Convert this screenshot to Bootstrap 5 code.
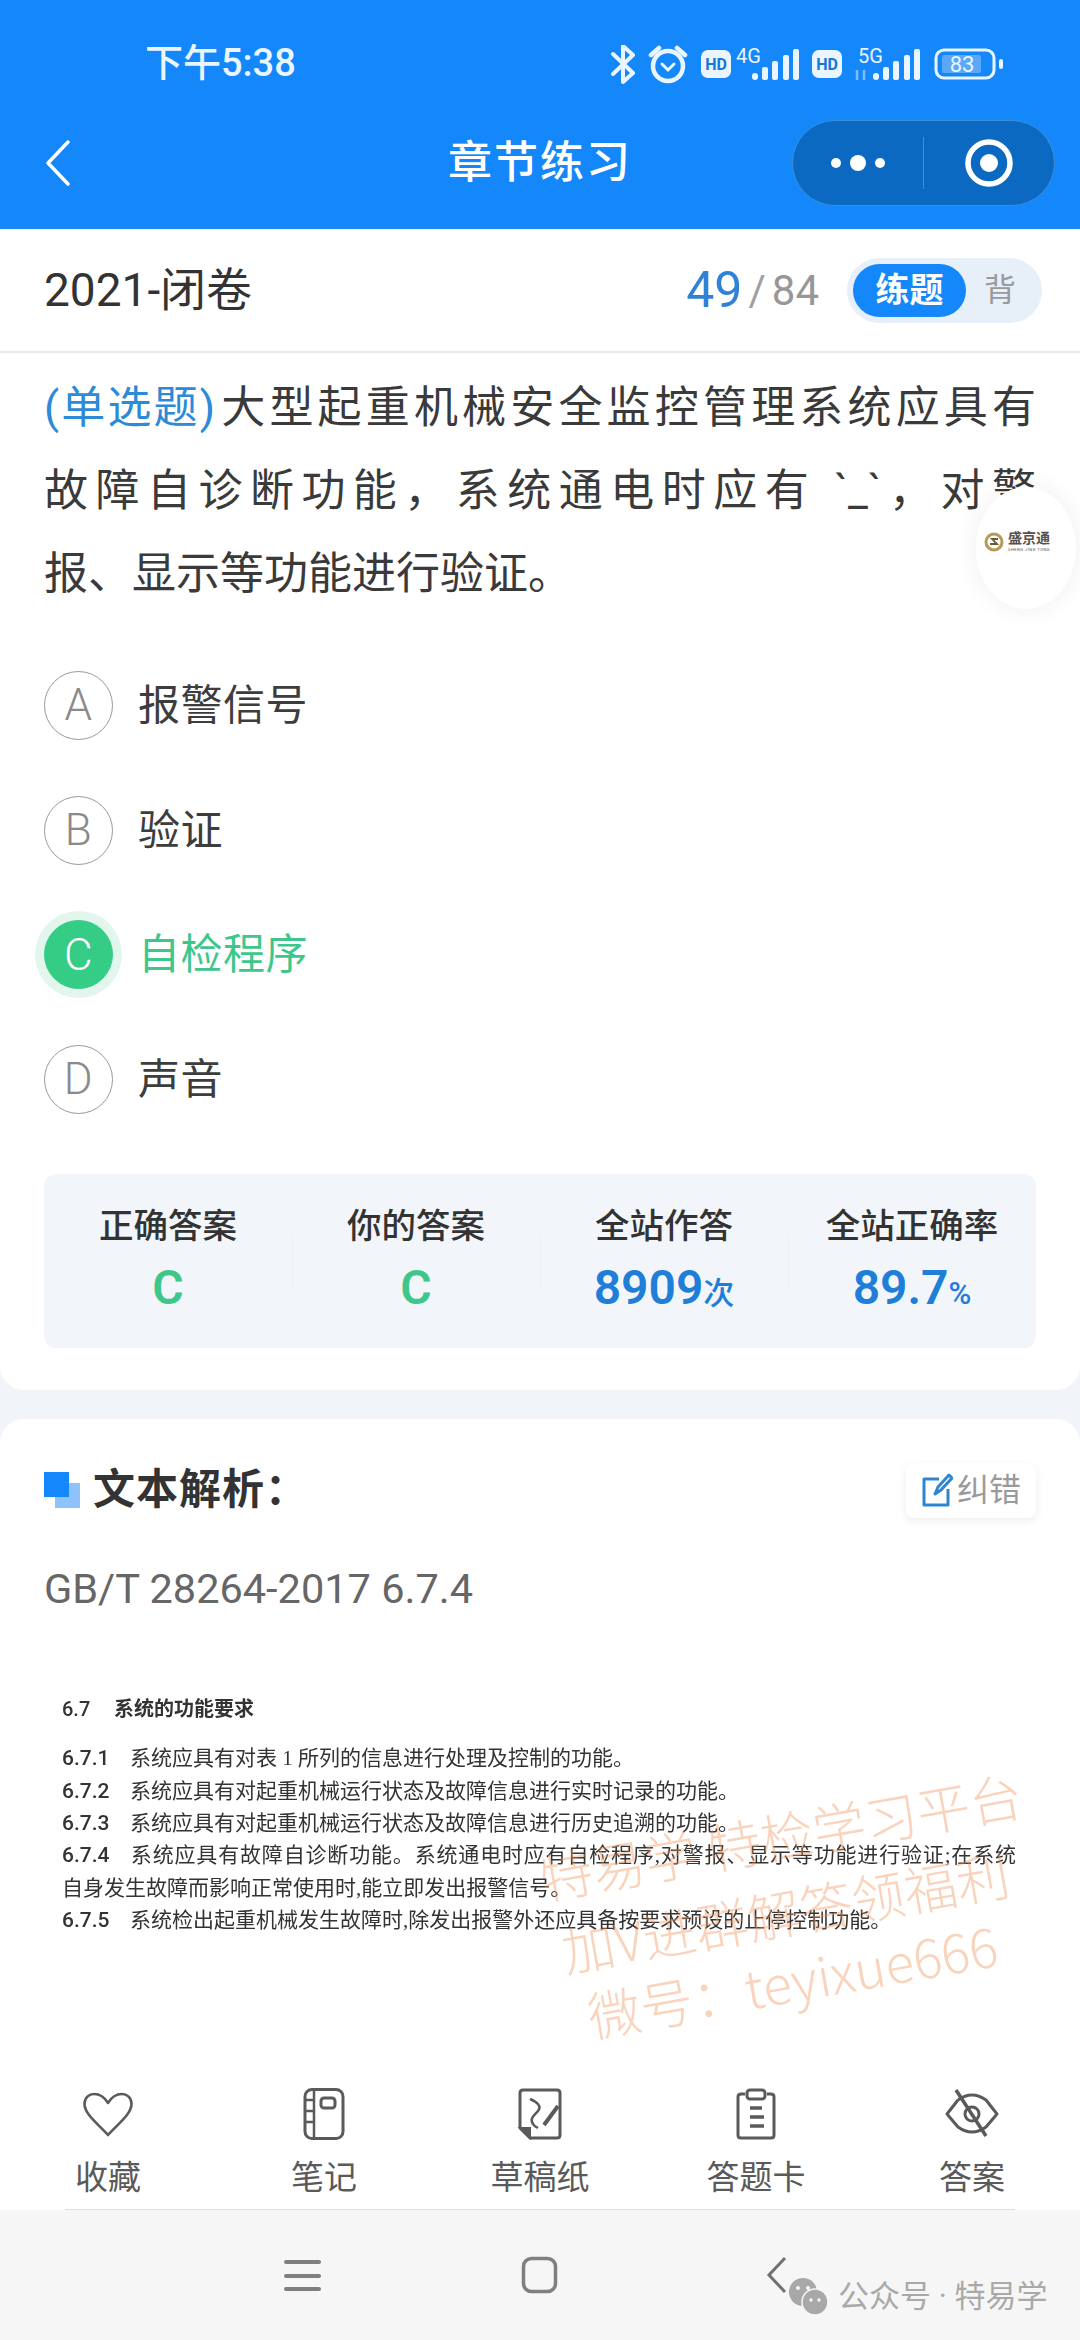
<!DOCTYPE html>
<html lang="zh-CN">
<head>
<meta charset="utf-8">
<title>章节练习</title>
<link href="https://cdn.jsdelivr.net/npm/bootstrap@5.3.0/dist/css/bootstrap.min.css" rel="stylesheet">
<style>
html,body{margin:0;background:#fff}
body{font-family:Roboto,"Noto Sans CJK SC",sans-serif;color:#3a3a3a}
.phone{width:1080px;height:2340px;overflow:hidden;position:relative;background:#f1f5f9}
.hdr{background:#1487fb;height:229px;color:#fff}
.status-row{height:120px;padding:40px 0 0 145px}
.clock{font-size:38px;line-height:46px;font-weight:500;color:#eaf5ff}
.status-svg{position:relative;display:block;margin:5px 0 0 auto;width:394px;height:40px}
.status-wrap{padding-right:76px}
.nav-row{height:86px}
.nav-side{flex:1 1 0;min-width:0}
.nav-title{font-size:44px;line-height:60px;font-weight:500;letter-spacing:2px}
.capsule{width:263px;height:86px;border-radius:43px;background:#0b69c2;border:1px solid #3a8fdc;margin-right:25px}
.capsule-part{flex:1 1 0;height:100%}
.capsule-sep{width:1px;height:52px;background:#3d8fdb}
.sub-bar{height:124px;background:#fff;border-bottom:2px solid #e9e9e9;padding:0 38px 0 44px}
.sub-title{font-size:46px;color:#333}
.num-now{font-size:50px;color:#2f82d6;font-weight:400}
.num-sep{font-size:42px;color:#a0a0a0;margin:0 6px}
.num-all{font-size:42px;color:#979797}
.mode-pill{width:195px;height:65px;border-radius:33px;background:#e7eff9;padding:6px;margin-left:28px}
.mode-on{width:113px;height:53px;border-radius:27px;background:#1487fb;color:#fff;font-size:34px;font-weight:700;line-height:53px;text-align:center}
.mode-off{font-size:32px;color:#9a9a9a;flex:1;text-align:center;padding-right:2px}
.top-card{background:#fff;padding:14px 44px 42px;border-radius:0 0 24px 24px}
.q-text{font-size:44px;line-height:83px;color:#3a3a3a;width:992px}
.q-line{display:block;text-align:justify;text-align-last:justify;white-space:nowrap}
.q-end{display:block}
.q-type{color:#2d8ad8;letter-spacing:-2px;margin-right:4px}
.opt-row{height:124.7px;gap:25px;font-size:42px;letter-spacing:.5px;color:#3d3d3d}
.opt-list{margin-top:27px}
.opt-ball{width:69px;height:69px;border-radius:50%;border:1.5px solid #999;color:#8a8a8a;font-size:44px;font-weight:300;line-height:1;flex:none}
.opt-good{color:#3fc78b}
.opt-good .opt-ball{background:#35cc86;border-color:#35cc86;color:#fff;box-shadow:0 0 0 9px #e2f6ed}
.stat-box{background:#f2f6fa;border-radius:12px;height:174px;margin-top:32px}
.stat-col{flex:1 1 0;text-align:center;padding-top:31px;position:relative}
.stat-col+.stat-col::before{content:"";position:absolute;left:0;top:62px;height:52px;width:1px;background:#ebf0f5}
.stat-lbl{font-size:34.5px;line-height:42px;font-weight:500;color:#333}
.stat-val{font-size:48px;line-height:62px;font-weight:600;margin-top:10px}
.val-green{color:#3fc78b}
.val-blue{color:#1f7fd8}
.stat-unit{font-size:31px;font-weight:500}
.low-card{background:#fff;border-radius:24px 24px 0 0;margin-top:29px;padding:44px 44px 0;flex:1 1 0;min-height:0;position:relative;overflow:hidden}
.sect-mark{width:36px;height:36px;position:relative;flex:none}
.sect-mark::before{content:"";position:absolute;left:11px;top:11px;width:25px;height:25px;background:#8fc1fb}
.sect-mark::after{content:"";position:absolute;left:0;top:0;width:25px;height:25px;background:#1487fb}
.sect-title{font-size:42px;font-weight:700;color:#333;margin-left:13px;letter-spacing:1px;line-height:50px}
.fix-btn{width:130px;height:55px;border-radius:8px;background:#fff;box-shadow:0 3px 10px rgba(0,0,0,.07);font-size:32px;color:#9a9a9a;gap:4px}
.ref-code{font-size:41.5px;color:#666;margin-top:46px;line-height:50px}
.scan{margin:79px 0 0 18px;width:954px;font-size:21px;line-height:32.4px;color:#333;font-family:"Liberation Serif","Noto Sans CJK SC",serif;filter:blur(.5px)}
.scan p{margin:0}
.scan .scan-head{font-weight:700;font-family:Roboto,"Noto Sans CJK SC",sans-serif;margin-bottom:17px;font-size:20px}
.scan-num{display:inline-block;width:68px;font-family:Roboto,sans-serif;font-weight:500}
.scan-fill{text-align:justify;text-align-last:justify;white-space:nowrap}
.scan-head .scan-num{width:52px}
.stamp{position:absolute;color:rgba(240,150,95,.42);font-size:53px;line-height:1;white-space:nowrap;transform:rotate(-10deg);transform-origin:left center;font-family:"Noto Sans CJK SC",sans-serif;font-weight:300}
.tabs{background:#fff;padding:19px 0 11px}
.tab-item{flex:1 1 0;text-align:center;color:#5a5a5a;font-size:33px;line-height:40px}
.tab-item svg{display:block;margin:0 auto 18px;width:56px;height:52px}
.tab-rule{height:1px;background:#ddd;margin:0 65px}
.tabs-wrap{background:#fff}
.sys-nav{height:130px;background:#f6f6f6;position:relative}
.sys-nav svg{display:block}
.mp-mark{position:absolute;left:787px;top:66px;color:#a9a9a9;font-size:31px;line-height:42px;gap:9px}
.float-dot{position:absolute;left:976px;top:487px;width:100px;height:122px;border-radius:50%;background:#fff;box-shadow:0 0 18px 8px rgba(0,0,0,.035)}
.float-brand{position:absolute;left:8px;top:44px;gap:4px;font-size:14px;font-weight:700;color:#55504a;line-height:1;white-space:nowrap}
.float-sub{font-size:4px;font-weight:400;display:block;margin-top:3px;letter-spacing:.5px}
</style>
</head>
<body>
<div class="phone d-flex flex-column">
  <header class="hdr">
    <div class="status-row d-flex justify-content-between status-wrap">
      <div class="clock">下午5:38</div>
      <svg class="status-svg" viewBox="610 45 394 40" fill="none">
        <path d="M613 54l20 19-10 9V46l10 9-20 19" stroke="#eaf5ff" stroke-width="4" stroke-linejoin="round" stroke-linecap="round"/>
        <circle cx="668" cy="66" r="15" stroke="#eaf5ff" stroke-width="4.5"/>
        <path d="M651 55l8-7M685 55l-8-7" stroke="#eaf5ff" stroke-width="4.5" stroke-linecap="round"/>
        <path d="M662 64l6 6 6-6" stroke="#eaf5ff" stroke-width="3" stroke-linecap="round"/>
        <rect x="701" y="50" width="30" height="28" rx="7" fill="#eaf5ff"/>
        <text x="716" y="70" text-anchor="middle" font-family="Roboto,sans-serif" font-size="16" font-weight="700" fill="#1477d9">HD</text>
        <text x="736" y="63" font-family="Roboto,sans-serif" font-size="20" fill="#eaf5ff">4G</text>
        <g fill="#eaf5ff"><rect x="752" y="73" width="6" height="7" rx="3"/><rect x="762" y="67" width="6" height="13" rx="2"/><rect x="772" y="61" width="6" height="19" rx="2"/><rect x="783" y="55" width="6" height="25" rx="2"/><rect x="793" y="49" width="6" height="31" rx="2"/></g>
        <rect x="812" y="50" width="30" height="28" rx="7" fill="#eaf5ff"/>
        <text x="827" y="70" text-anchor="middle" font-family="Roboto,sans-serif" font-size="16" font-weight="700" fill="#1477d9">HD</text>
        <text x="858" y="63" font-family="Roboto,sans-serif" font-size="20" fill="#eaf5ff">5G</text>
        <path d="M857 80v-10M864 70v10" stroke="#7dbcf8" stroke-width="2.5"/>
        <g fill="#eaf5ff"><rect x="873" y="73" width="6" height="7" rx="3"/><rect x="883" y="67" width="6" height="13" rx="2"/><rect x="893" y="61" width="6" height="19" rx="2"/><rect x="904" y="55" width="6" height="25" rx="2"/><rect x="914" y="49" width="6" height="31" rx="2"/></g>
        <rect x="936" y="50" width="58" height="28" rx="8" stroke="#eaf5ff" stroke-width="3"/>
        <rect x="942" y="55" width="39" height="18" rx="2" fill="#5aa8f7"/>
        <text x="962" y="72" text-anchor="middle" font-family="Roboto,sans-serif" font-size="22" fill="#eaf5ff">83</text>
        <rect x="999" y="59" width="4" height="10" rx="2" fill="#eaf5ff"/>
      </svg>
    </div>
    <div class="nav-row d-flex align-items-center">
      <div class="nav-side">
        <svg width="30" height="48" viewBox="0 0 30 48" fill="none" class="d-block" style="margin-left:43px"><path d="M25 3L5 24l20 21" stroke="#fff" stroke-width="3.5" stroke-linecap="round" stroke-linejoin="round"/></svg>
      </div>
      <div class="nav-title">章节练习</div>
      <div class="nav-side d-flex justify-content-end">
        <div class="capsule d-flex align-items-center">
          <div class="capsule-part d-flex align-items-center justify-content-center">
            <svg width="56" height="20" viewBox="0 0 56 20"><circle cx="6" cy="10" r="5" fill="#fff"/><circle cx="28" cy="10" r="8" fill="#fff"/><circle cx="50" cy="10" r="5" fill="#fff"/></svg>
          </div>
          <div class="capsule-sep"></div>
          <div class="capsule-part d-flex align-items-center justify-content-center">
            <svg width="50" height="50" viewBox="0 0 50 50" fill="none"><circle cx="25" cy="25" r="21" stroke="#fff" stroke-width="5.5"/><circle cx="25" cy="25" r="9" fill="#fff"/></svg>
          </div>
        </div>
      </div>
    </div>
  </header>

  <div class="sub-bar d-flex align-items-center justify-content-between">
    <div class="sub-title">2021-闭卷</div>
    <div class="d-flex align-items-center">
      <span class="num-now">49</span><span class="num-sep">/</span><span class="num-all">84</span>
      <div class="mode-pill d-flex align-items-center">
        <div class="mode-on">练题</div>
        <div class="mode-off">背</div>
      </div>
    </div>
  </div>

  <section class="top-card">
    <div class="q-text"><span class="q-line"><span class="q-type">(单选题)</span>大型起重机械安全监控管理系统应具有</span><span class="q-line">故障自诊断功能，系统通电时应有 `_`，对警</span><span class="q-end">报、显示等功能进行验证。</span></div>
    <div class="opt-list">
      <div class="opt-row d-flex align-items-center"><span class="opt-ball d-flex align-items-center justify-content-center">A</span><span>报警信号</span></div>
      <div class="opt-row d-flex align-items-center"><span class="opt-ball d-flex align-items-center justify-content-center">B</span><span>验证</span></div>
      <div class="opt-row opt-good d-flex align-items-center"><span class="opt-ball d-flex align-items-center justify-content-center">C</span><span>自检程序</span></div>
      <div class="opt-row d-flex align-items-center"><span class="opt-ball d-flex align-items-center justify-content-center">D</span><span>声音</span></div>
    </div>
    <div class="stat-box d-flex">
      <div class="stat-col"><div class="stat-lbl">正确答案</div><div class="stat-val val-green">C</div></div>
      <div class="stat-col"><div class="stat-lbl">你的答案</div><div class="stat-val val-green">C</div></div>
      <div class="stat-col"><div class="stat-lbl">全站作答</div><div class="stat-val val-blue">8909<span class="stat-unit">次</span></div></div>
      <div class="stat-col"><div class="stat-lbl">全站正确率</div><div class="stat-val val-blue">89.7<span class="stat-unit">%</span></div></div>
    </div>
  </section>

  <section class="low-card">
    <div class="d-flex align-items-center justify-content-between">
      <div class="d-flex align-items-center"><span class="sect-mark"></span><span class="sect-title">文本解析：</span></div>
      <div class="fix-btn d-flex align-items-center justify-content-center">
        <svg width="32" height="34" viewBox="0 0 32 34" fill="none"><path d="M18 6H3v26h24V16M14 21l3-7L28 2l3 3-11 12z" stroke="#2f86cf" stroke-width="3" stroke-linejoin="round"/></svg>
        <span>纠错</span>
      </div>
    </div>
    <div class="ref-code">GB/T 28264-2017 6.7.4</div>
    <div class="scan">
      <p class="scan-head"><span class="scan-num">6.7</span>系统的功能要求</p>
      <p><span class="scan-num">6.7.1</span>系统应具有对表 1 所列的信息进行处理及控制的功能。</p>
      <p><span class="scan-num">6.7.2</span>系统应具有对起重机械运行状态及故障信息进行实时记录的功能。</p>
      <p><span class="scan-num">6.7.3</span>系统应具有对起重机械运行状态及故障信息进行历史追溯的功能。</p>
      <p class="scan-fill"><span class="scan-num">6.7.4</span>系统应具有故障自诊断功能。系统通电时应有自检程序,对警报、显示等功能进行验证;在系统</p>
      <p>自身发生故障而影响正常使用时,能立即发出报警信号。</p>
      <p><span class="scan-num">6.7.5</span>系统检出起重机械发生故障时,除发出报警外还应具备按要求预设的止停控制功能。</p>
    </div>
    <div class="stamp" style="left:540px;top:432px">特易学 特检学习平台</div>
    <div class="stamp" style="left:562px;top:505px">加V进群解答领福利</div>
    <div class="stamp" style="left:588px;top:570px">微号：teyixue666</div>
  </section>

  <div class="tabs d-flex">
    <div class="tab-item">
      <svg viewBox="0 0 56 52" fill="none"><path d="M28 47C18 36 4.500 26 4.500 16 4.500 9.500 9 6 14 6c6 0 11 4 14 9 3-5 8-9 14-9 5 0 9.500 3.500 9.500 10 0 10-13.500 20-23.500 31z" stroke="#5a5a5a" stroke-width="2.600" stroke-linejoin="round"/></svg>
      收藏
    </div>
    <div class="tab-item">
      <svg viewBox="0 0 56 52" fill="none" stroke="#5a5a5a"><rect x="9" y="1.500" width="38" height="49" rx="7" stroke-width="3"/><path d="M18 2v48M9 12h9M9 23h9M9 34h9" stroke-width="2.500"/><rect x="25" y="10" width="14" height="10" rx="3" stroke-width="3"/></svg>
      笔记
    </div>
    <div class="tab-item">
      <svg viewBox="0 0 56 52" fill="none" stroke="#5a5a5a"><path d="M8 40V5q0-3 3-3h34q3 0 3 3v42q0 3-3 3H18z" stroke-width="3" stroke-linejoin="round"/><path d="M8 40h10v10z" fill="#5a5a5a" stroke-width="2"/><path d="M18 11c7 3 12 7 8 12-3 4-9 7-5 13 1 2 3 3 5 4" stroke-width="2.500"/><path d="M46 18L32 37" stroke-width="4"/></svg>
      草稿纸
    </div>
    <div class="tab-item">
      <svg viewBox="0 0 56 52" fill="none" stroke="#5a5a5a"><path d="M17 6H13q-3 0-3 3v38q0 3 3 3h30q3 0 3-3V9q0-3-3-3h-4" stroke-width="3"/><rect x="19" y="2" width="18" height="9" rx="3" stroke-width="3"/><path d="M22 20h12M22 29h14M22 38h14" stroke-width="3.500"/></svg>
      答题卡
    </div>
    <div class="tab-item">
      <svg viewBox="0 0 56 52" fill="none" stroke="#5a5a5a"><path d="M14 12L3 26l11 13q14 10 28 0L53 26 42 12Q28 2 14 12" stroke-width="3" stroke-linejoin="round"/><circle cx="28" cy="26" r="7" stroke-width="3"/><path d="M12 2l30 46" stroke-width="3.500"/></svg>
      答案
    </div>
  </div>
  <div class="tabs-wrap"><div class="tab-rule"></div></div>
  <div class="sys-nav d-flex align-items-center" style="padding-left:284px">
    <svg width="37" height="33" viewBox="0 0 37 33"><rect y="1" width="37" height="4" rx="2" fill="#7f7f7f"/><rect y="15" width="37" height="4" rx="2" fill="#7f7f7f"/><rect y="28" width="37" height="4" rx="2" fill="#7f7f7f"/></svg>
    <svg width="37" height="38" viewBox="0 0 37 38" fill="none" style="margin-left:200px"><rect x="2.500" y="2.500" width="32" height="33" rx="8" stroke="#7f7f7f" stroke-width="3.500"/></svg>
    <svg width="22" height="38" viewBox="0 0 22 38" fill="none" style="margin-left:208px"><path d="M19 2L3 19l16 17" stroke="#707070" stroke-width="3"/></svg>
    <div class="mp-mark d-flex align-items-center">
      <svg width="42" height="40" viewBox="0 0 42 40"><ellipse cx="16" cy="15" rx="14" ry="14" fill="#a8a8a8"/><ellipse cx="28" cy="25" rx="13" ry="13" fill="#a8a8a8" stroke="#f6f6f6" stroke-width="1.500"/><circle cx="11" cy="11" r="2" fill="#f6f6f6"/><circle cx="21" cy="11" r="2" fill="#f6f6f6"/><circle cx="24" cy="23" r="1.700" fill="#f6f6f6"/><circle cx="32" cy="23" r="1.700" fill="#f6f6f6"/></svg>
      <span>公众号 · 特易学</span>
    </div>
  </div>

  <div class="float-dot">
    <div class="float-brand d-flex align-items-center">
      <svg width="20" height="20" viewBox="0 0 20 20" fill="none"><circle cx="10" cy="10" r="8" stroke="#b59a58" stroke-width="3"/><path d="M14 7H8l5 5H6" stroke="#6d5b34" stroke-width="1.800"/></svg>
      <span>盛京通<span class="float-sub">SHENG JING TONG</span></span>
    </div>
  </div>
</div>
<script src="https://cdn.jsdelivr.net/npm/bootstrap@5.3.0/dist/js/bootstrap.bundle.min.js"></script>
</body>
</html>
